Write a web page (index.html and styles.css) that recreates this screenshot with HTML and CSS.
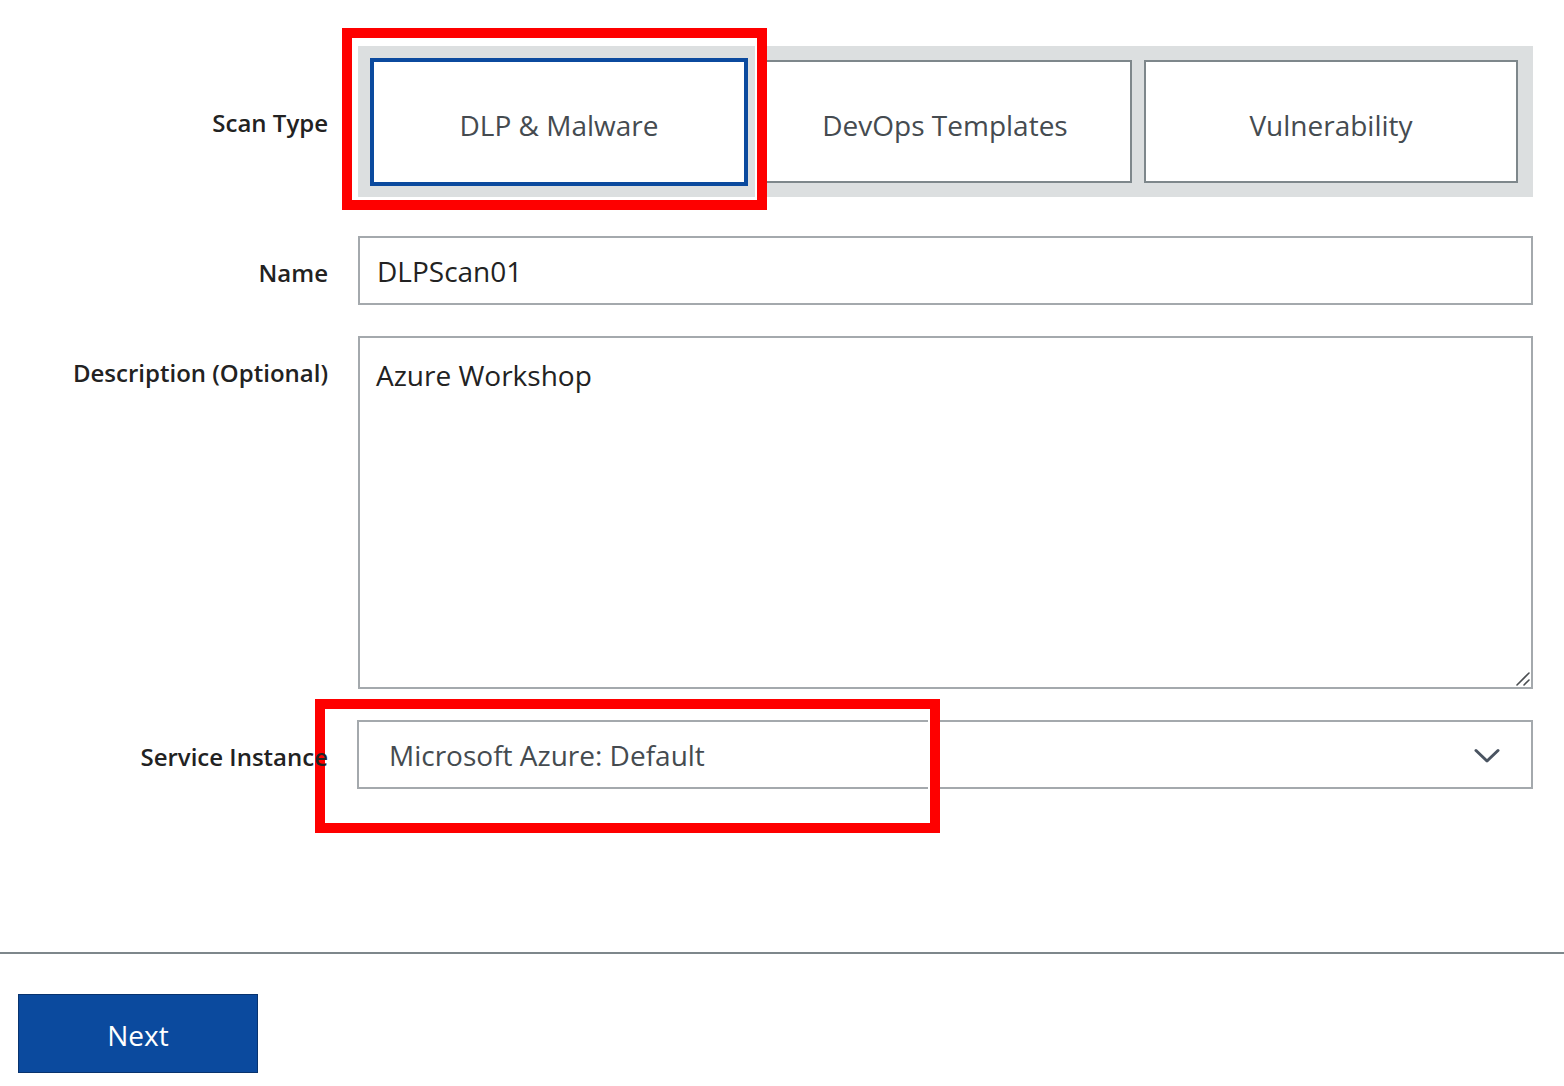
FILE: index.html
```html
<!DOCTYPE html>
<html>
<head>
<meta charset="utf-8">
<link rel="stylesheet" href="styles.css">
</head>
<body>
<div class="page">
  <form class="form">
    <div class="row row-scan">
      <div class="label">Scan Type</div>
      <div class="control">
        <div class="scan-wrap">
          <div class="scan-group">
            <button type="button" class="scan-btn selected">DLP &amp; Malware</button>
            <button type="button" class="scan-btn">DevOps Templates</button>
            <button type="button" class="scan-btn">Vulnerability</button>
          </div>
          <div class="highlight highlight-scan"></div>
        </div>
      </div>
    </div>
    <div class="row row-name">
      <div class="label">Name</div>
      <div class="control">
        <input class="text-input" type="text" value="DLPScan01">
      </div>
    </div>
    <div class="row row-desc">
      <div class="label">Description (Optional)</div>
      <div class="control">
        <div class="area-wrap">
          <textarea class="text-area">Azure Workshop</textarea>
          <svg class="grip" width="16" height="16" viewBox="0 0 16 16"><path d="M2 14 L14 2 M9 14 L14 9" fill="none" stroke="#4b4f52" stroke-width="1.6" stroke-linecap="round"/></svg>
        </div>
      </div>
    </div>
    <div class="row row-service">
      <div class="label label-top">Service Instance</div>
      <div class="control">
        <div class="select-wrap">
          <div class="select">
            <span class="select-value">Microsoft Azure: Default</span>
            <svg class="chevron" width="26" height="16" viewBox="0 0 26 16"><path d="M2 2.5 L13 13 L24 2.5" fill="none" stroke="#4a5461" stroke-width="3" stroke-linecap="round" stroke-linejoin="round"/></svg>
          </div>
          <div class="highlight highlight-select"></div>
        </div>
      </div>
    </div>
  </form>
  <div class="footer">
    <button type="button" class="next-btn">Next</button>
  </div>
</div>
</body>
</html>
```
FILE: styles.css
```css
* { box-sizing: border-box; }
html, body {
  margin: 0;
  padding: 0;
  background: #ffffff;
  font-family: "Open Sans", "Noto Sans", sans-serif;
  color: #222222;
}
.page {
  width: 1564px;
  height: 1086px;
  overflow: hidden;
}
.form {
  padding-top: 46px;
  padding-right: 31px;
}
.row {
  display: flex;
  align-items: flex-start;
}
.label {
  width: 328px;
  flex: 0 0 328px;
  text-align: right;
  font-size: 24px;
  font-weight: 600;
  color: #222222;
  line-height: 32px;
  white-space: nowrap;
}
.label-top {
  position: relative;
  z-index: 2;
}
.control {
  margin-left: 30px;
  flex: 1 1 auto;
  min-width: 0;
}
.row-scan { height: 151px; }
.row-scan .label { padding-top: 61px; }
.scan-wrap { position: relative; }
.scan-group {
  height: 151px;
  background: #dcdfe0;
  display: flex;
  align-items: center;
  gap: 12px;
  padding-left: 14px;
}
.scan-btn {
  width: 374px;
  height: 123px;
  background: #ffffff;
  border: 2px solid #7e878b;
  font-family: "Open Sans", "Noto Sans", sans-serif;
  font-size: 28px;
  color: #454b50;
  padding: 6px 0 0;
  cursor: pointer;
}
.scan-btn.selected {
  border-color: #0b4a9e;
  outline: 2px solid #0b4a9e;
  outline-offset: 0;
  height: 124px;
}
.highlight {
  position: absolute;
  border: 10px solid #fe0000;
  box-shadow: inset 0 0 0 2px #ffffff;
  pointer-events: none;
}
.highlight-scan { left: -16px; top: -18px; width: 425px; height: 182px; }
.row-name { margin-top: 39px; }
.row-name .label { padding-top: 21px; }
.text-input {
  display: block;
  width: 100%;
  height: 69px;
  border: 2px solid #a4a9ad;
  padding: 0 17px;
  font-family: "Open Sans", "Noto Sans", sans-serif;
  font-size: 28px;
  color: #222222;
  background: #ffffff;
  outline: none;
}
.row-desc { margin-top: 31px; }
.row-desc .label { padding-top: 21px; }
.area-wrap { position: relative; }
.text-area {
  display: block;
  width: 100%;
  height: 353px;
  border: 2px solid #a4a9ad;
  padding: 18px 16px;
  font-family: "Open Sans", "Noto Sans", sans-serif;
  font-size: 28px;
  line-height: 38px;
  color: #222222;
  background: #ffffff;
  outline: none;
  resize: none;
  margin: 0;
}
.grip {
  position: absolute;
  right: 2px;
  bottom: 2px;
}
.row-service { margin-top: 31px; }
.row-service .label { padding-top: 21px; }
.select-wrap { position: relative; margin-left: -1px; }
.select {
  height: 69px;
  border: 2px solid #a4a9ad;
  background: #ffffff;
  display: flex;
  align-items: center;
  justify-content: space-between;
  padding: 0 31px 0 30px;
  font-size: 28px;
  color: #454b50;
}
.chevron { display: block; margin-top: 2px; }
.highlight-select { left: -42px; top: -21px; width: 625px; height: 134px; }
.footer {
  margin-top: 163px;
  border-top: 2px solid #7e878b;
  padding: 40px 0 0 18px;
}
.next-btn {
  width: 240px;
  height: 79px;
  background: #0b4a9e;
  border: 1px solid #08336e;
  color: #ffffff;
  font-family: "Open Sans", "Noto Sans", sans-serif;
  font-size: 28px;
  padding: 3px 0 0;
  cursor: pointer;
}
```
